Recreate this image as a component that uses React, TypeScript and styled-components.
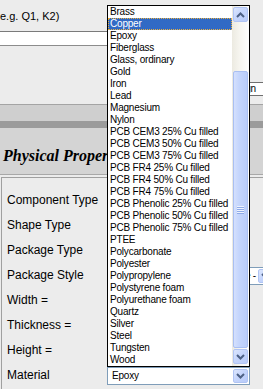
import styled, { createGlobalStyle } from "styled-components";

const GlobalStyle = createGlobalStyle`
  html, body {
    margin: 0;
    padding: 0;
    width: 263px;
    height: 389px;
    overflow: hidden;
    background: #ececec;
  }
  body {
    font-family: "Liberation Sans", Arial, sans-serif;
    color: #000;
  }
`;

const Page = styled.div`
  position: relative;
  width: 263px;
  height: 389px;
  overflow: hidden;
  display: flex;
  flex-direction: column;
`;

const Hint = styled.div`
  height: 31px;
  box-sizing: border-box;
  padding-top: 10px;
  font-size: 11px;
  line-height: 13px;
  white-space: nowrap;
`;

const NameInput = styled.div`
  width: 200px;
  height: 15px;
  box-sizing: border-box;
  background: #fff;
  border-top: 1px solid #7a7a7a;
  border-bottom: 1px solid #8c8c8c;
`;

const CodeRow = styled.div`
  margin-top: 36px;
  height: 14px;
  display: flex;
  padding-left: 221px;
`;

const CodeBox = styled.div`
  width: 80px;
  flex-shrink: 0;
  box-sizing: border-box;
  background: #fff;
  border: 1px solid #6f6f6f;
  padding-left: 4px;
  font-size: 10px;
  line-height: 12px;
  letter-spacing: -0.2px;
  white-space: nowrap;
`;

const SectionBand = styled.div`
  margin-top: 8px;
  height: 17px;
  box-sizing: border-box;
  background: #cfcfcf;
  border-top: 1px solid #a4a4a4;
`;

const DarkBand = styled.div`
  height: 7px;
  background: #9b9b9b;
`;

const Header = styled.h2`
  margin: 0;
  height: 47px;
  box-sizing: border-box;
  padding: 19px 0 0 3px;
  background: #d4d4d4;
  border-bottom: 1px solid #a8a8a8;
  font-family: "Liberation Serif", "Times New Roman", serif;
  font-weight: bold;
  font-style: italic;
  font-size: 16px;
  line-height: 18px;
  white-space: nowrap;
`;

const Panel = styled.div`
  flex: 1;
  margin: 2px 0 0 1px;
  padding: 10px 0 0 5px;
  border-top: 1px solid #a0a0a0;
  border-left: 1px solid #a0a0a0;
`;

const Row = styled.div`
  display: grid;
  grid-template-columns: 100px 1fr;
  align-items: center;
  height: 25px;
`;

const Label = styled.div`
  font-size: 12px;
  line-height: 25px;
  white-space: nowrap;
`;

const Select = styled.div<{ $width: number }>`
  width: ${(p) => p.$width}px;
  height: 18px;
  box-sizing: border-box;
  padding: 1px;
  display: flex;
  background: #fff;
  border: 1px solid #7f9db9;
`;

const SelectText = styled.div<{ $right?: boolean }>`
  flex: 1;
  padding: 0 2px 0 3px;
  text-align: ${(p) => (p.$right ? "right" : "left")};
  font-size: 10px;
  line-height: 14px;
  letter-spacing: -0.2px;
  white-space: nowrap;
  overflow: hidden;
`;

const ArrowButton = styled.div<{ $tall?: boolean }>`
  width: 15px;
  height: ${(p) => (p.$tall ? 15 : 14)}px;
  flex-shrink: 0;
  box-sizing: border-box;
  display: flex;
  align-items: center;
  justify-content: center;
  background: linear-gradient(135deg, #dce6fd 0%, #c5d5fc 45%, #b8cbf9 100%);
  border: 1px solid #b0c4f4;
  border-radius: 2px;
`;

const ListPopup = styled.div`
  position: absolute;
  left: 107px;
  top: 5px;
  width: 143px;
  height: 362px;
  box-sizing: border-box;
  display: flex;
  background: #fff;
  border: 1px solid #000;
`;

const Options = styled.div`
  width: 124px;
  display: flex;
  flex-direction: column;
`;

const Option = styled.div<{ $selected?: boolean }>`
  height: 12px;
  box-sizing: border-box;
  padding-left: 1px;
  border: 1px ${(p) => (p.$selected ? "dotted #e8b040" : "solid transparent")};
  background: ${(p) => (p.$selected ? "#316ac5" : "transparent")};
  color: ${(p) => (p.$selected ? "#fff" : "#000")};
  font-size: 10px;
  line-height: 10px;
  letter-spacing: -0.2px;
  white-space: nowrap;
  overflow: hidden;
`;

const Scrollbar = styled.div`
  width: 17px;
  box-sizing: border-box;
  padding: 1px;
  display: flex;
  flex-direction: column;
  background: linear-gradient(90deg, #eceae1 0%, #f7f6f1 50%, #fefefe 100%);
`;

const Thumb = styled.div`
  margin-top: 49px;
  height: 277px;
  box-sizing: border-box;
  display: flex;
  align-items: center;
  justify-content: center;
  background: linear-gradient(90deg, #d4e0fd 0%, #c4d5fc 40%, #b9ccfa 100%);
  border: 1px solid #a9bff2;
  border-radius: 2px;
`;

const Grip = styled.div`
  width: 7px;
  height: 8px;
  background: repeating-linear-gradient(
    180deg,
    #eef3fe 0px,
    #eef3fe 1px,
    #8eaae8 1px,
    #8eaae8 2px
  );
`;

const DownSlot = styled.div`
  margin-top: 1px;
`;

const materials = [
  "Brass",
  "Copper",
  "Epoxy",
  "Fiberglass",
  "Glass, ordinary",
  "Gold",
  "Iron",
  "Lead",
  "Magnesium",
  "Nylon",
  "PCB CEM3 25% Cu filled",
  "PCB CEM3 50% Cu filled",
  "PCB CEM3 75% Cu filled",
  "PCB FR4 25% Cu filled",
  "PCB FR4 50% Cu filled",
  "PCB FR4 75% Cu filled",
  "PCB Phenolic 25% Cu filled",
  "PCB Phenolic 50% Cu filled",
  "PCB Phenolic 75% Cu filled",
  "PTEE",
  "Polycarbonate",
  "Polyester",
  "Polypropylene",
  "Polystyrene foam",
  "Polyurethane foam",
  "Quartz",
  "Silver",
  "Steel",
  "Tungsten",
  "Wood",
];

const labels = [
  "Component Type",
  "Shape Type",
  "Package Type",
  "Package Style",
  "Width =",
  "Thickness =",
  "Height =",
];

function Chevron({ up }: { up?: boolean }) {
  return (
    <svg width="9" height="6" viewBox="0 0 9 6">
      <path
        d={up ? "M1 5 L4.5 1.5 L8 5" : "M1 1 L4.5 4.5 L8 1"}
        stroke="#4d6185"
        strokeWidth="2"
        fill="none"
      />
    </svg>
  );
}

function App() {
  return (
    <Page>
      <GlobalStyle />
      <Hint>e.g. Q1, K2)</Hint>
      <NameInput />
      <CodeRow>
        <CodeBox>Design</CodeBox>
      </CodeRow>
      <SectionBand />
      <DarkBand />
      <Header>Physical Properties</Header>
      <Panel>
        {labels.map((label) => (
          <Row key={label}>
            <Label>{label}</Label>
            {label === "Package Style" ? (
              <Select $width={168}>
                <SelectText $right>Dual In-line -</SelectText>
                <ArrowButton>
                  <Chevron />
                </ArrowButton>
              </Select>
            ) : (
              <div />
            )}
          </Row>
        ))}
        <Row>
          <Label>Material</Label>
          <Select $width={143}>
            <SelectText>Epoxy</SelectText>
            <ArrowButton>
              <Chevron />
            </ArrowButton>
          </Select>
        </Row>
      </Panel>

      {/* open dropdown list of the Material select, drawn over the form */}
      <ListPopup>
        <Options>
          {materials.map((m) => (
            <Option key={m} $selected={m === "Copper"}>
              {m}
            </Option>
          ))}
        </Options>
        <Scrollbar>
          <ArrowButton $tall>
            <Chevron up />
          </ArrowButton>
          <Thumb>
            <Grip />
          </Thumb>
          <DownSlot>
            <ArrowButton $tall>
              <Chevron />
            </ArrowButton>
          </DownSlot>
        </Scrollbar>
      </ListPopup>
    </Page>
  );
}

export default App;
